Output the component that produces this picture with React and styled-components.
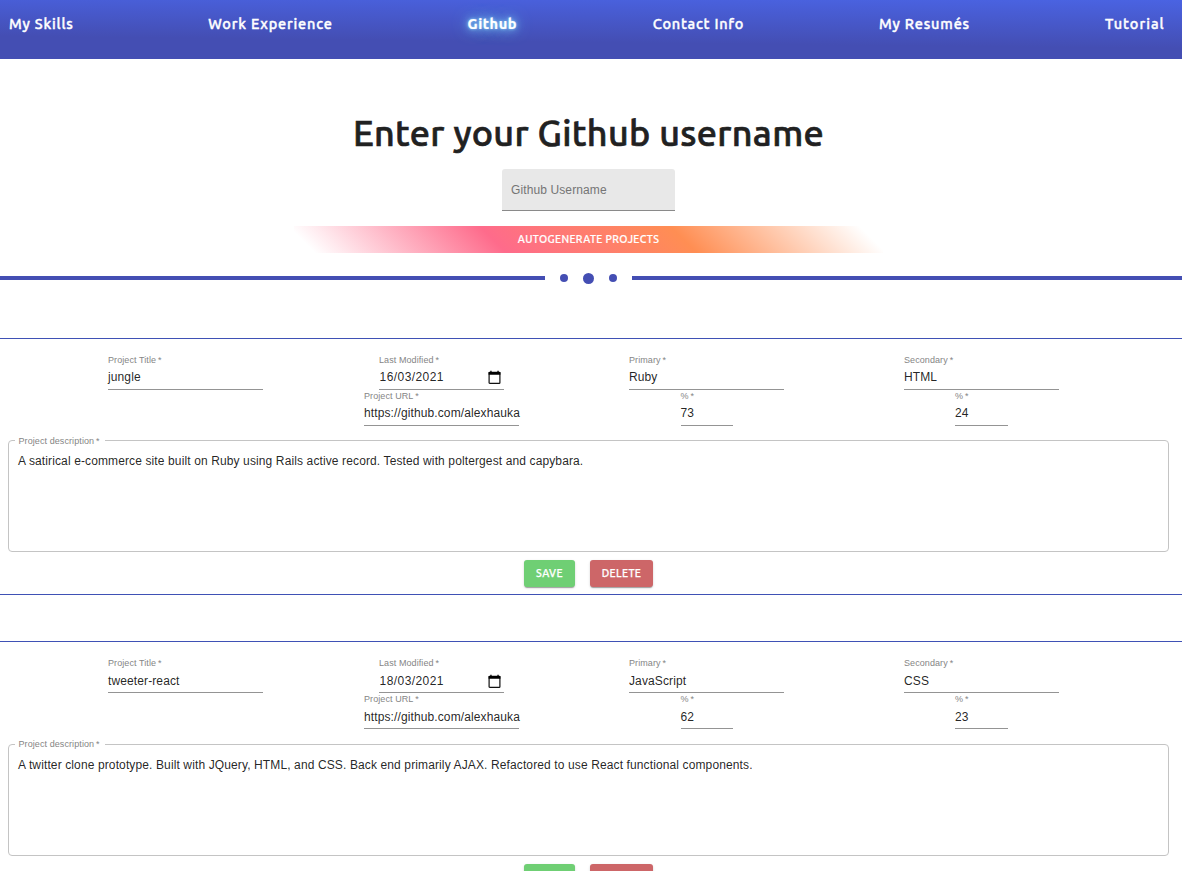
import React from 'react';
import styled, { createGlobalStyle, css } from 'styled-components';

const display = '"Ubuntu", "Noto Sans", "Open Sans", sans-serif';
const body = '"Liberation Sans", Arial, sans-serif';

const GlobalStyle = createGlobalStyle`
  * { box-sizing: border-box; }
  html, body { margin: 0; height: 100%; overflow: hidden; background: #fff; }
  body { font-family: ${body}; color: rgba(0, 0, 0, 0.87); }
`;

const Page = styled.div`
  width: 1182px;
  height: 871px;
  overflow: hidden;
`;

const Nav = styled.nav`
  display: flex;
  justify-content: space-between;
  height: 59px;
  padding: 12px 17px 0 9px;
  background: linear-gradient(180.6deg, #4a63e2 0%, #444eb3 68%, #444eb3 100%);
`;

const NavLink = styled.a`
  width: ${(p) => p.$width}px;
  white-space: nowrap;
  font: 500 14.5px/24px ${display};
  letter-spacing: ${(p) => p.$spacing}px;
  -webkit-text-stroke: 0.4px #fff;
  color: #fff;
  ${(p) =>
    p.$active &&
    css`
      font-weight: 700;
      -webkit-text-stroke-width: 0.2px;
      text-shadow: 0 0 3px #8fe0ff, 0 0 8px #7fd0f5, 0 0 16px #7fd0f5;
    `}
`;

const Intro = styled.header`
  display: flex;
  flex-direction: column;
  align-items: center;
  width: 1177px;
  padding-top: 49px;
`;

const Title = styled.h1`
  margin: 0;
  height: 61px;
  font: 500 36px/50px ${display};
  letter-spacing: 0.3px;
  -webkit-text-stroke: 0.65px #212121;
  white-space: nowrap;
  color: #212121;
`;

const UsernameInput = styled.input`
  width: 173px;
  height: 42px;
  padding: 0 9px;
  border: 0;
  border-bottom: 1px solid #8a8a8a;
  border-radius: 3px 3px 0 0;
  background: #e8e8e8;
  font: 12px ${body};
  letter-spacing: 0.113px;
  &::placeholder { color: #757575; opacity: 1; }
`;

const GenerateButton = styled.button`
  width: 589px;
  height: 27px;
  margin-top: 15px;
  padding: 0;
  border: 0;
  background: linear-gradient(45deg, rgba(254, 107, 139, 0) 3.4%, #fe6b8b 34.5%, #ff8e53 65.5%, rgba(255, 142, 83, 0) 96.2%);
  color: #fff;
  font: 500 10.5px/27px ${display};
  letter-spacing: 0.36px;
  -webkit-text-stroke: 0.2px #fff;
`;

const Divider = styled.div`
  display: flex;
  align-items: center;
  height: 12px;
  margin-top: 19px;
`;

const Rule = styled.div`
  flex: ${(p) => (p.$width ? `0 0 ${p.$width}px` : '1')};
  height: 4px;
  background: #444eb3;
`;

const Dots = styled.div`
  display: flex;
  align-items: center;
  justify-content: center;
  gap: 15px;
  width: 87px;
`;

const Dot = styled.span`
  width: ${(p) => p.$size}px;
  height: ${(p) => p.$size}px;
  border-radius: 50%;
  background: #444eb3;
`;

const Projects = styled.main`
  display: flex;
  flex-direction: column;
  gap: 46.4px;
  padding-top: 54px;
`;

const Card = styled.section`
  height: 257px;
  border-top: 1px solid #3f51b5;
  border-bottom: 1px solid #3f51b5;
`;

const Fields = styled.div`
  display: grid;
  grid-template-columns: 256px 265px 275px 155px;
  padding: 15px 0 0 108px;
`;

const Column = styled.div`
  display: flex;
  flex-direction: column;
  align-items: center;
  width: 155px;
`;

const FieldBox = styled.label`
  display: flex;
  flex-direction: column;
  width: ${(p) => p.$width}px;
  height: 36px;
  border-bottom: 1px solid #949494;
`;

const FieldLabel = styled.span`
  height: 12.2px;
  font-size: 9px;
  line-height: 12px;
  letter-spacing: 0.085px;
  white-space: nowrap;
  color: #858585;
`;

const ValueRow = styled.span`
  display: flex;
  align-items: center;
  justify-content: space-between;
  height: 22px;
  padding: ${(p) => (p.$date ? '0 3px 0 0.6px' : 0)};
  white-space: nowrap;
  font-size: 12px;
  letter-spacing: ${(p) => (p.$date ? 0.42 : 0.113)}px;
`;

const Description = styled.fieldset`
  width: 1161px;
  height: 117.5px;
  margin: 8.7px 0 0 8px;
  padding: 0 9px;
  border: 1px solid #c4c4c4;
  border-radius: 4px;
  min-width: 0;
`;

const Legend = styled.legend`
  height: 12px;
  margin-left: -3px;
  padding: 0 5px 0 3.5px;
  font-size: 9px;
  line-height: 12px;
  letter-spacing: 0.085px;
  color: #858585;
`;

const DescriptionText = styled.p`
  margin: 7.5px 0 0;
  font-size: 12px;
  line-height: 14px;
  letter-spacing: 0.12px;
`;

const Actions = styled.div`
  display: flex;
  justify-content: center;
  gap: 15px;
  width: 1177px;
  padding-top: 8px;
`;

const ActionButton = styled.button`
  width: ${(p) => p.$width}px;
  height: 27px;
  padding: 0;
  border: 0;
  border-radius: 3px;
  background: ${(p) => p.$color};
  box-shadow: 0 2px 1px -1px rgba(0, 0, 0, 0.2), 0 1px 1px rgba(0, 0, 0, 0.14), 0 1px 3px rgba(0, 0, 0, 0.12);
  color: #fff;
  font: 500 10.5px/27px ${display};
  letter-spacing: 0.4px;
  -webkit-text-stroke: 0.25px #fff;
`;

const CalendarIcon = () => (
  <svg width="13" height="14" viewBox="0 0 13 14">
    <rect x="1.1" y="2.4" width="10.8" height="11" rx="0.7" fill="none" stroke="#111" strokeWidth="1.2" />
    <path d="M0.600 1.900h11.800V4.700H0.600zM2.300 0.800h1.300v1.400H2.300zM9.400 0.800h1.300v1.400H9.400z" fill="#000" />
  </svg>
);

const Field = ({ label, value, width = 155, date }) => (
  <FieldBox $width={width}>
    <FieldLabel>{label}{'\u2009*'}</FieldLabel>
    <ValueRow $date={date}>
      {value}
      {date && <CalendarIcon />}
    </ValueRow>
  </FieldBox>
);

const links = [
  { text: 'My Skills', width: 64.5, spacing: 0.82 },
  { text: 'Work Experience', width: 124.5, spacing: 0.82 },
  { text: 'Github', width: 50.5, spacing: 0.6, active: true },
  { text: 'Contact Info', width: 91.5, spacing: 0.76 },
  { text: 'My Resumés', width: 91.2, spacing: 0.82 },
  { text: 'Tutorial', width: 60, spacing: 1 },
];

const projects = [
  {
    title: 'jungle',
    date: '16/03/2021',
    url: 'https://github.com/alexhauka',
    primary: ['Ruby', '73'],
    secondary: ['HTML', '24'],
    description:
      'A satirical e-commerce site built on Ruby using Rails active record. Tested with poltergest and capybara.',
  },
  {
    title: 'tweeter-react',
    date: '18/03/2021',
    url: 'https://github.com/alexhauka',
    primary: ['JavaScript', '62'],
    secondary: ['CSS', '23'],
    description:
      'A twitter clone prototype. Built with JQuery, HTML, and CSS. Back end primarily AJAX. Refactored to use React functional components.',
  },
];

const Project = ({ project }) => (
  <Card>
    <Fields>
      <Column>
        <Field label="Project Title" value={project.title} />
      </Column>
      <Column>
        <Field label="Last Modified" value={project.date} width={125} date />
        <Field label="Project URL" value={project.url} />
      </Column>
      <Column>
        <Field label="Primary" value={project.primary[0]} />
        <Field label="%" value={project.primary[1]} width={52} />
      </Column>
      <Column>
        <Field label="Secondary" value={project.secondary[0]} />
        <Field label="%" value={project.secondary[1]} width={53} />
      </Column>
    </Fields>
    <Description>
      <Legend>Project description{'\u2009*'}</Legend>
      <DescriptionText>{project.description}</DescriptionText>
    </Description>
    <Actions>
      <ActionButton $width={51} $color="#6fcf74">SAVE</ActionButton>
      <ActionButton $width={63} $color="#cd6668">DELETE</ActionButton>
    </Actions>
  </Card>
);

export default function App() {
  return (
    <Page>
      <GlobalStyle />
      <Nav>
        {links.map((l) => (
          <NavLink key={l.text} $width={l.width} $active={l.active} $spacing={l.spacing}>
            {l.text}
          </NavLink>
        ))}
      </Nav>
      <Intro>
        <Title>Enter your Github username</Title>
        <UsernameInput placeholder="Github Username" />
        <GenerateButton>AUTOGENERATE PROJECTS</GenerateButton>
      </Intro>
      <Divider>
        <Rule $width={545} />
        <Dots>
          <Dot $size={8} />
          <Dot $size={11} />
          <Dot $size={8} />
        </Dots>
        <Rule />
      </Divider>
      <Projects>
        {projects.map((p) => (
          <Project key={p.title} project={p} />
        ))}
      </Projects>
    </Page>
  );
}
